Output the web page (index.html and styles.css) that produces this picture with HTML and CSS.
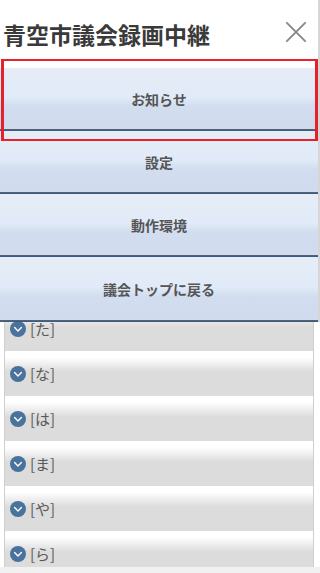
FILE: index.html
```html
<!DOCTYPE html>
<html lang="ja">
<head>
<meta charset="utf-8">
<title>青空市議会録画中継</title>
<link rel="stylesheet" href="styles.css">
</head>
<body>
<div class="page">
  <div class="list-area">
    <ul class="kana-list">
      <li class="kana-row"><span class="chev"><svg viewBox="0 0 16 16"><path d="M4.6 6.6 8 9.9 11.4 6.6"/></svg></span><span class="kana-label">[あ]</span></li>
      <li class="kana-row"><span class="chev"><svg viewBox="0 0 16 16"><path d="M4.6 6.6 8 9.9 11.4 6.6"/></svg></span><span class="kana-label">[か]</span></li>
      <li class="kana-row"><span class="chev"><svg viewBox="0 0 16 16"><path d="M4.6 6.6 8 9.9 11.4 6.6"/></svg></span><span class="kana-label">[さ]</span></li>
      <li class="kana-row"><span class="chev"><svg viewBox="0 0 16 16"><path d="M4.6 6.6 8 9.9 11.4 6.6"/></svg></span><span class="kana-label">[た]</span></li>
      <li class="kana-row"><span class="chev"><svg viewBox="0 0 16 16"><path d="M4.6 6.6 8 9.9 11.4 6.6"/></svg></span><span class="kana-label">[な]</span></li>
      <li class="kana-row"><span class="chev"><svg viewBox="0 0 16 16"><path d="M4.6 6.6 8 9.9 11.4 6.6"/></svg></span><span class="kana-label">[は]</span></li>
      <li class="kana-row"><span class="chev"><svg viewBox="0 0 16 16"><path d="M4.6 6.6 8 9.9 11.4 6.6"/></svg></span><span class="kana-label">[ま]</span></li>
      <li class="kana-row"><span class="chev"><svg viewBox="0 0 16 16"><path d="M4.6 6.6 8 9.9 11.4 6.6"/></svg></span><span class="kana-label">[や]</span></li>
      <li class="kana-row"><span class="chev"><svg viewBox="0 0 16 16"><path d="M4.6 6.6 8 9.9 11.4 6.6"/></svg></span><span class="kana-label">[ら]</span></li>
    </ul>
  </div>
  <div class="page-foot"></div>
</div>

<div class="drawer">
  <div class="drawer-head">
    <h1 class="site-title">青空市議会録画中継</h1>
    <span class="close-btn" aria-label="閉じる"><svg viewBox="0 0 24 24"><path d="M1.5 1.5 22.5 22.5M22.5 1.5 1.5 22.5"/></svg></span>
  </div>
  <nav class="drawer-nav">
    <a class="nav-item">お知らせ</a>
    <a class="nav-item">設定</a>
    <a class="nav-item">動作環境</a>
    <a class="nav-item nav-last">議会トップに戻る</a>
  </nav>
</div>
<div class="focus-ring"></div>
</body>
</html>
```
FILE: styles.css
```css
* { box-sizing: border-box; }
html, body {
  margin: 0;
  padding: 0;
  width: 320px;
  height: 573px;
  overflow: hidden;
  background: #fff;
  font-family: "Noto Sans CJK JP", "Noto Sans", "Liberation Sans", sans-serif;
}
.page {
  height: 573px;
  display: flex;
  flex-direction: column;
}
.list-area {
  flex: 1;
  overflow: hidden;
  padding-top: 171px;
}
.kana-list {
  list-style: none;
  margin: 0 0 0 4px;
  padding: 0;
  width: 310px;
  border-left: 1px solid #cfcfcf;
  border-right: 1px solid #cfcfcf;
}
.kana-row {
  height: 45px;
  display: flex;
  align-items: center;
  gap: 4px;
  padding-left: 5px;
  background: linear-gradient(#ffffff 0%, #ffffff 14%, #dcdcdc 46%, #dcdcdc 100%);
}
.chev {
  width: 16px;
  height: 16px;
  border-radius: 50%;
  background: #49739c;
  display: flex;
}
.chev svg {
  width: 16px;
  height: 16px;
  fill: none;
  stroke: #fff;
  stroke-width: 1.4;
  stroke-linecap: round;
  stroke-linejoin: round;
}
.kana-label {
  font-size: 15px;
  color: #5a5a5a;
  line-height: 1;
}
.page-foot {
  height: 6px;
  background: #f1f1f1;
}

.drawer {
  position: absolute;
  top: 0;
  left: 0;
  width: 320px;
  background: #fff;
  border-right: 2px solid #d6d6d6;
}
.drawer-head {
  height: 68px;
  display: flex;
  align-items: center;
  justify-content: space-between;
  padding: 0 11px 0 3px;
}
.site-title {
  margin: 0;
  font-size: 23px;
  font-weight: bold;
  color: #3a3a3a;
  line-height: 1;
}
.close-btn {
  width: 22px;
  height: 22px;
  margin-bottom: 4px;
  display: flex;
}
.close-btn svg {
  width: 22px;
  height: 22px;
  fill: none;
  stroke: #8a8a8a;
  stroke-width: 2.2;
}
.drawer-nav {
  display: flex;
  flex-direction: column;
}
.nav-item {
  height: 62px;
  margin-bottom: 1px;
  display: flex;
  align-items: center;
  justify-content: center;
  font-size: 14px;
  font-weight: bold;
  color: #555;
  background: linear-gradient(#e6edf6 0%, #e1eaf8 48%, #d2ddef 62%, #cfdbee 100%);
  border-bottom: 1px solid #5b5f66;
  box-shadow: 0 1px 0 #30608f;
}
.nav-last {
  height: 64px;
}
.focus-ring {
  position: absolute;
  left: 1px;
  top: 59px;
  width: 317px;
  height: 82px;
  border: 3px solid #e8202a;
  border-top-width: 2px;
  border-bottom-width: 2px;
}
```
